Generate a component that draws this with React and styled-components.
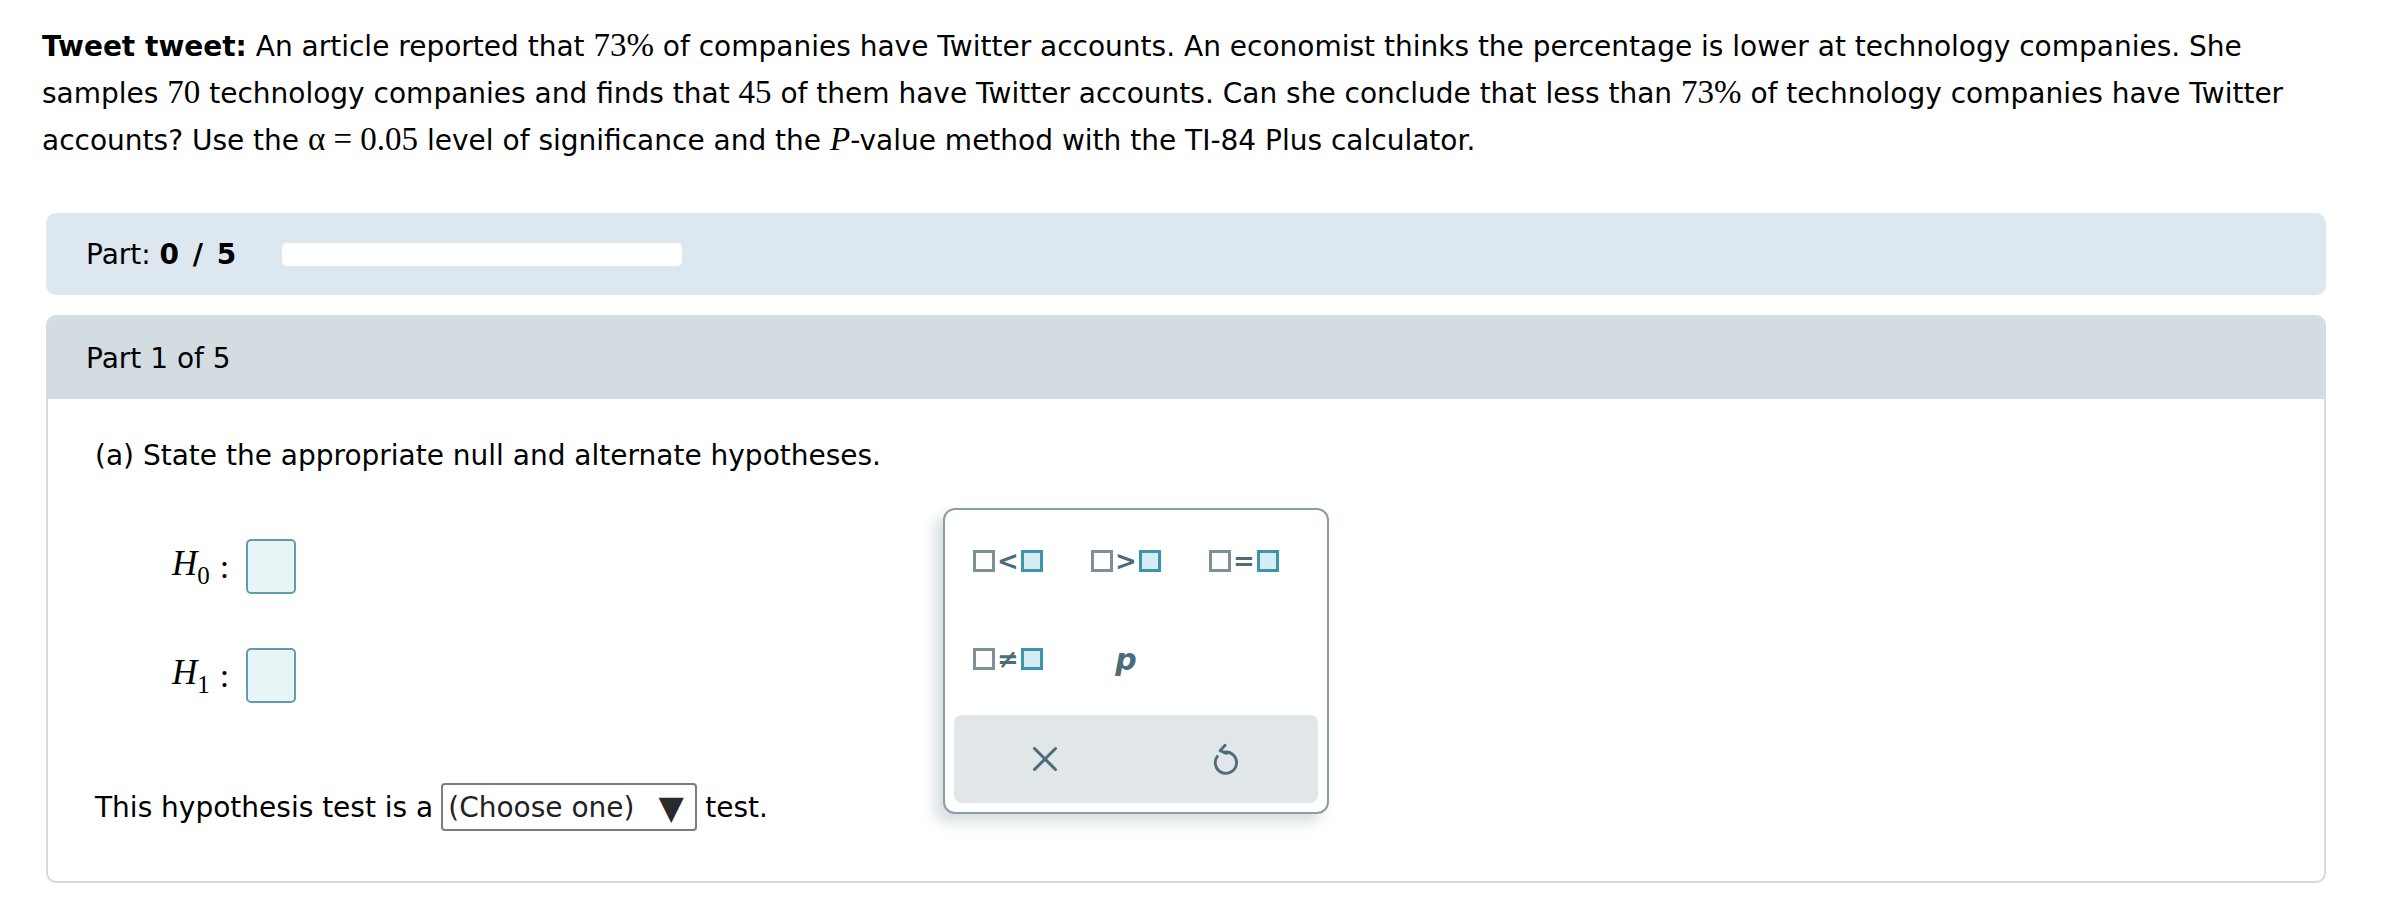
import React from 'react'
import styled, { createGlobalStyle } from 'styled-components'

const GlobalStyle = createGlobalStyle`
  body {
    margin: 0;
    background: #fff;
    color: #000;
    font-family: "DejaVu Sans", Verdana, sans-serif;
  }
`

const Page = styled.div`
  padding: 23px 70px 0 42px;
`

const Question = styled.p`
  margin: 0;
  font-size: 28px;
  line-height: 47px;
`

const Math = styled.span`
  font-family: "Liberation Serif", "Times New Roman", serif;
  font-size: 33px;
  line-height: 1;
  font-style: ${(p) => (p.$italic ? 'italic' : 'normal')};
`

const ProgressBox = styled.div`
  margin: 49px 0 0 4px;
  height: 82px;
  background: #dde7f0;
  border-radius: 10px;
  display: flex;
  align-items: center;
  padding-left: 40px;
  gap: 46px;
  font-size: 28px;
`

const Count = styled.b`
  word-spacing: 4px;
`

const ProgressTrack = styled.div`
  width: 400px;
  height: 23px;
  background: #fff;
  border-radius: 5px;
`

const Card = styled.div`
  margin: 20px 0 0 4px;
  border: 2px solid #d3dce0;
  border-radius: 10px;
`

const CardHeader = styled.div`
  height: 82px;
  background: #d3dce0;
  border-radius: 8px 8px 0 0;
  display: flex;
  align-items: center;
  padding-left: 38px;
  font-size: 28px;
`

const CardBody = styled.div`
  position: relative;
  padding: 33px 0 50px 47px;
  font-size: 28px;
  line-height: 47px;
`

const Prompt = styled.div``

const Hypotheses = styled.div`
  display: flex;
  flex-direction: column;
  gap: 54px;
  margin: 60px 0 0 77px;
`

const HypRow = styled.div`
  display: flex;
  align-items: center;
  height: 55px;
`

const HLabel = styled.span`
  font-family: "Liberation Serif", "Times New Roman", serif;
  font-style: italic;
  font-size: 35px;
  line-height: 1;
  sub {
    font-style: normal;
    font-size: 25px;
    vertical-align: -9px;
  }
`

const Colon = styled.span`
  font-family: "Liberation Serif", "Times New Roman", serif;
  font-size: 34px;
  margin: 0 17px 0 10px;
`

const AnswerBox = styled.div`
  width: 50px;
  height: 55px;
  box-sizing: border-box;
  border: 2px solid #5f9dad;
  border-radius: 5px;
  background: #e8f4f6;
`

const TestRow = styled.div`
  margin-top: 80px;
  display: flex;
  align-items: center;
  gap: 8px;
`

const Select = styled.div`
  width: 256px;
  height: 48px;
  box-sizing: border-box;
  border: 2px solid #7c7c7c;
  border-radius: 4px;
  display: flex;
  align-items: center;
  gap: 24px;
  padding: 0 0 0 5px;
  font-size: 28px;
  color: #222;
`

const Arrow = styled.span`
  font-size: 33px;
  color: #2a2a2a;
`

const Palette = styled.div`
  position: absolute;
  left: 895px;
  top: 109px;
  width: 386px;
  height: 306px;
  box-sizing: border-box;
  background: #fff;
  border: 2px solid #8a9ea6;
  border-radius: 12px;
  box-shadow: -8px 8px 14px rgba(40, 60, 70, 0.18);
  padding: 2px 0 0 4px;
  display: flex;
  flex-direction: column;
`

const KeyGrid = styled.div`
  display: grid;
  grid-template-columns: repeat(3, 118px);
  grid-auto-rows: 98px;
`

const Key = styled.div`
  display: flex;
  align-items: center;
  justify-content: center;
  color: #4b6c78;
`

const GraySq = styled.span`
  width: 22px;
  height: 22px;
  box-sizing: border-box;
  border: 3px solid #7b9099;
`

const TealSq = styled.span`
  width: 22px;
  height: 22px;
  box-sizing: border-box;
  border: 3px solid #3c95ad;
  background: #d4ecf2;
`

const Op = styled.span`
  font-family: "DejaVu Sans", sans-serif;
  font-size: 26px;
  font-weight: bold;
  line-height: 1;
  margin: 0 2px;
  color: #4b6c78;
`

const PKey = styled.span`
  font-family: "DejaVu Sans", sans-serif;
  font-size: 30px;
  font-weight: bold;
  font-style: italic;
  color: #4b6c78;
`

const ActionBar = styled.div`
  margin: 7px 0 0 5px;
  width: 364px;
  height: 88px;
  background: #e1e6e9;
  border-radius: 8px;
  display: grid;
  grid-template-columns: 1fr 1fr;
`

const ActionBtn = styled.div`
  display: flex;
  align-items: center;
  justify-content: center;
`

const CloseIcon = () => (
  <svg width="28" height="28" viewBox="0 0 24 24" fill="none" stroke="#4b6c78" strokeWidth="2.6" strokeLinecap="round">
    <path d="M3 3 L21 21 M21 3 L3 21" />
  </svg>
)

const UndoIcon = () => (
  <svg width="30" height="34" viewBox="0 0 24 27" fill="none" stroke="#4b6c78" strokeWidth="2.3" strokeLinecap="round" strokeLinejoin="round">
    <path d="M10 8 A8.5 8.5 0 1 1 4.2 11.5" />
    <path d="M10.5 2.5 L6.5 6.8 L11.5 9" />
  </svg>
)

const Relation = ({ op }) => (
  <Key>
    <GraySq />
    <Op>{op}</Op>
    <TealSq />
  </Key>
)

export default function App() {
  return (
    <Page>
      <GlobalStyle />
      <Question>
        <b>Tweet tweet:</b> An article reported that <Math>73%</Math> of companies have Twitter accounts. An
        economist thinks the percentage is lower at technology companies. She samples <Math>70</Math> technology
        companies and finds that <Math>45</Math> of them have Twitter accounts. Can she conclude that less than{' '}
        <Math>73%</Math> of technology companies have Twitter accounts? Use the <Math>α = 0.05</Math> level of
        significance and the <Math $italic>P</Math>-value method with the TI-84 Plus calculator.
      </Question>

      <ProgressBox>
        <span>
          Part: <Count>0 / 5</Count>
        </span>
        <ProgressTrack />
      </ProgressBox>

      <Card>
        <CardHeader>Part 1 of 5</CardHeader>
        <CardBody>
          <Prompt>(a) State the appropriate null and alternate hypotheses.</Prompt>
          <Hypotheses>
            <HypRow>
              <HLabel>
                H<sub>0</sub>
              </HLabel>
              <Colon>:</Colon>
              <AnswerBox />
            </HypRow>
            <HypRow>
              <HLabel>
                H<sub>1</sub>
              </HLabel>
              <Colon>:</Colon>
              <AnswerBox />
            </HypRow>
          </Hypotheses>
          <TestRow>
            This hypothesis test is a
            <Select>
              <span>(Choose one)</span>
              <Arrow>▼</Arrow>
            </Select>
            test.
          </TestRow>

          <Palette>
            <KeyGrid>
              <Relation op="<" />
              <Relation op=">" />
              <Relation op="=" />
              <Relation op="≠" />
              <Key>
                <PKey>p</PKey>
              </Key>
            </KeyGrid>
            <ActionBar>
              <ActionBtn>
                <CloseIcon />
              </ActionBtn>
              <ActionBtn>
                <UndoIcon />
              </ActionBtn>
            </ActionBar>
          </Palette>
        </CardBody>
      </Card>
    </Page>
  )
}
